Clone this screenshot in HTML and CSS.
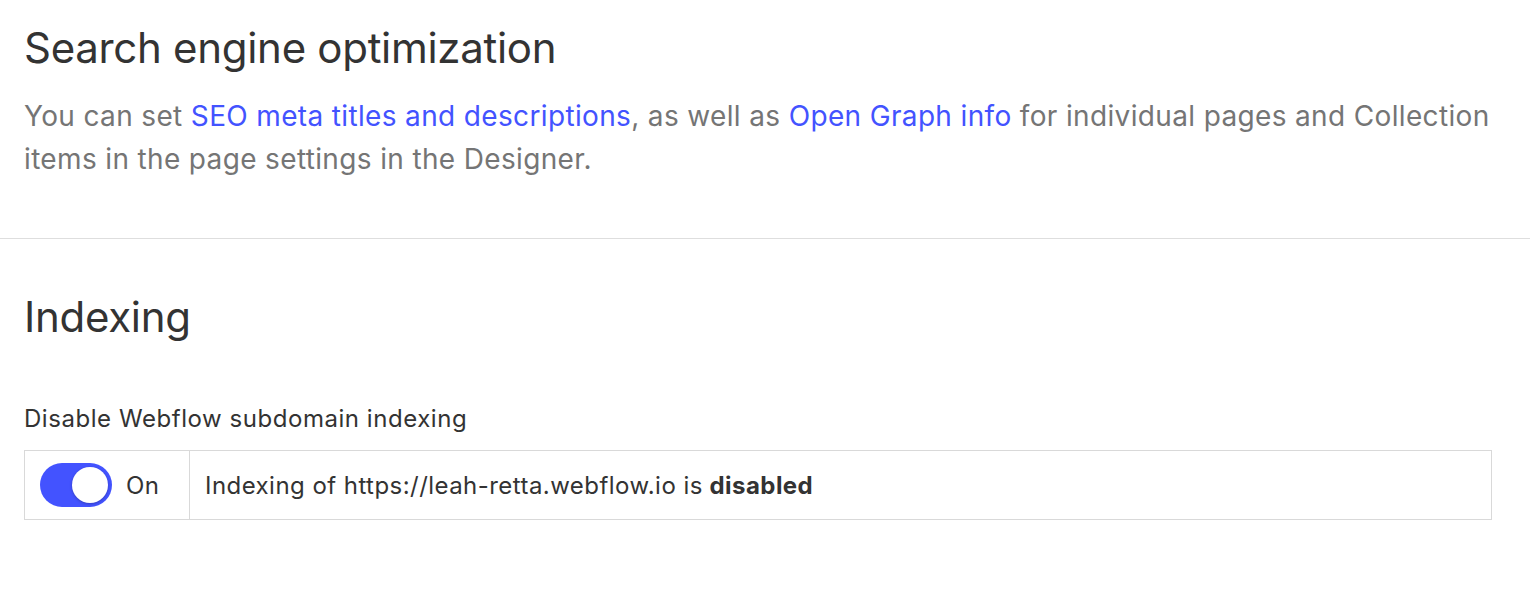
FILE: index.html
```html
<!DOCTYPE html>
<html>
<head>
<meta charset="utf-8">
<link rel="stylesheet" href="styles.css">
</head>
<body>
<section class="section seo">
  <h2 class="title">Search engine optimization</h2>
  <p class="desc">You can set <a href="#" class="link">SEO meta titles and descriptions</a>, as well as <a href="#" class="link">Open Graph info</a> for individual pages and Collection items in the page settings in the Designer.</p>
</section>
<hr class="divider">
<section class="section indexing">
  <h2 class="title">Indexing</h2>
  <div class="label">Disable Webflow subdomain indexing</div>
  <div class="field">
    <div class="toggle-cell">
      <span class="switch"><span class="knob"></span></span>
      <span class="state">On</span>
    </div>
    <div class="info">Indexing of https://leah-retta.webflow.io is <strong>disabled</strong></div>
  </div>
</section>
</body>
</html>
```
FILE: styles.css
```css
html, body {
  margin: 0;
  padding: 0;
  background: #ffffff;
  font-family: Inter, "Noto Sans", sans-serif;
  color: #333333;
}
.section {
  padding: 0 24px;
}
.seo {
  padding-top: 22px;
  padding-bottom: 57px;
}
.title {
  margin: 0;
  font-size: 42px;
  font-weight: 400;
  line-height: 52px;
  color: #333333;
  letter-spacing: -0.3px;
}
.desc {
  margin: 21px 0 0;
  font-size: 28px;
  line-height: 43px;
  letter-spacing: 0.35px;
  color: #757575;
  max-width: 1482px;
}
.link {
  color: #4353ff;
  text-decoration: none;
}
.divider {
  margin: 0;
  border: 0;
  border-top: 1px solid #dedede;
}
.indexing {
  padding-top: 52px;
}
.label {
  margin-top: 60px;
  font-size: 24px;
  line-height: 32px;
  letter-spacing: 0.55px;
  color: #333333;
}
.field {
  margin-top: 15px;
  display: flex;
  width: 1466px;
  height: 68px;
  border: 1px solid #d9d9d9;
}
.toggle-cell {
  display: flex;
  align-items: center;
  gap: 14px;
  width: 149px;
  padding-left: 15px;
  border-right: 1px solid #d9d9d9;
}
.switch {
  display: flex;
  align-items: center;
  justify-content: flex-end;
  width: 72px;
  height: 44px;
  padding: 0 4px;
  box-sizing: border-box;
  border-radius: 22px;
  background: #4353ff;
}
.knob {
  width: 36px;
  height: 36px;
  border-radius: 50%;
  background: #ffffff;
  box-shadow: 0 1px 3px rgba(0,0,0,0.25);
}
.state {
  font-size: 24px;
  letter-spacing: 0.4px;
  color: #333333;
}
.info {
  display: flex;
  align-items: center;
  padding-left: 15px;
  font-size: 24px;
  letter-spacing: 0.45px;
  color: #333333;
}
.info strong {
  font-weight: 700;
  margin-left: 0.28em;
}
```
